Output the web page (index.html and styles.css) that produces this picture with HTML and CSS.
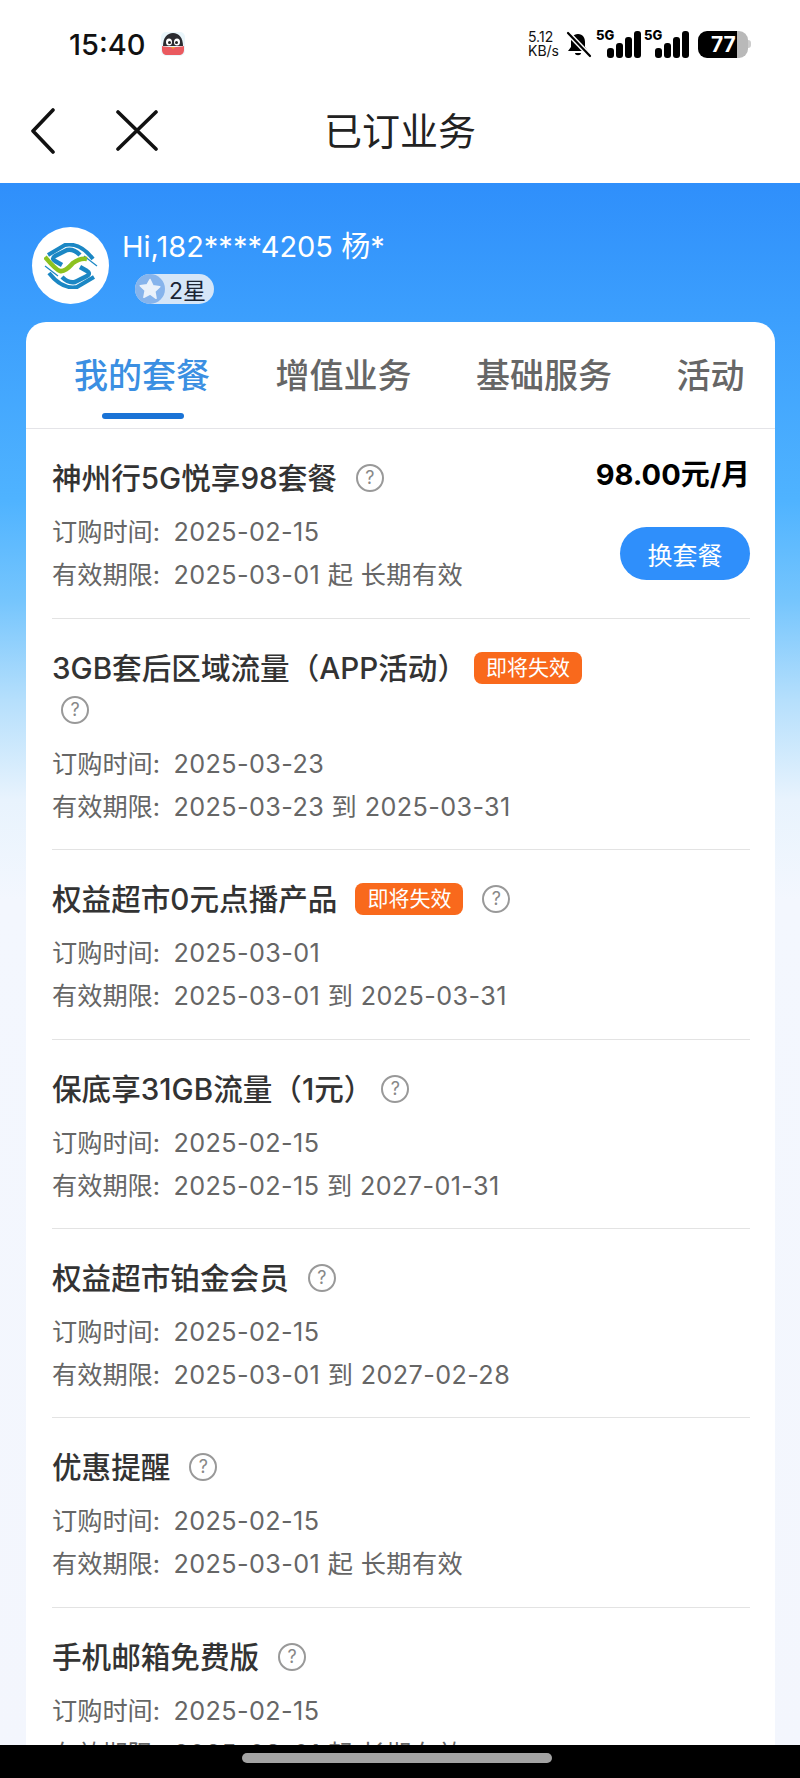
FILE: index.html
```html
<!DOCTYPE html>
<html lang="zh-CN">
<head>
<meta charset="UTF-8">
<meta name="viewport" content="width=device-width, initial-scale=1.0">
<title>已订业务</title>
<link rel="stylesheet" href="styles.css">
</head>
<body>

<div class="status">
  <div class="status-left">
    <span class="time">15:40</span>
    <svg class="qq" width="24" height="24" viewBox="0 0 24 24">
      <rect width="24" height="24" rx="5" fill="#eaf6fb"/>
      <path d="M2 14C2 6 6 1 12 1s10 5 10 13z" fill="#2b2b30"/>
      <path d="M1 14c4 1.500 18 1.500 22 0v4c0 3-2 5-5 5H6c-3 0-5-2-5-5z" fill="#ea5a5f"/>
      <ellipse cx="8" cy="10" rx="3" ry="3.500" fill="#fff"/>
      <ellipse cx="16" cy="10" rx="3" ry="3.500" fill="#fff"/>
      <circle cx="8.500" cy="10.500" r="1.500" fill="#222"/>
      <circle cx="15.500" cy="10.500" r="1.500" fill="#222"/>
      <path d="M10 15h4l-2 2z" fill="#f0a030"/>
    </svg>
  </div>
  <div class="status-right">
    <div class="speed"><span>5.12</span><span>KB/s</span></div>
    <svg class="bell" width="27" height="27" viewBox="0 0 27 27">
      <path d="M13 3c-5 0-7 4-7 8v5l-3 4h20l-3-4v-5c0-4-2-8-7-8z" fill="#000"/>
      <path d="M10 22h6c0 3-6 3-6 0z" fill="#000"/>
      <path d="M3 2l22 23" stroke="#fff" stroke-width="5"/>
      <path d="M3 2l22 23" stroke="#000" stroke-width="2.200" stroke-linecap="round"/>
    </svg>
    <div class="signal">
      <span class="sig-label">5G</span>
      <svg width="44" height="27" viewBox="0 0 44 27">
        <rect x="9" y="17" width="7" height="10" rx="3"/>
        <rect x="18" y="12" width="7" height="15" rx="3"/>
        <rect x="27" y="6" width="7" height="21" rx="3"/>
        <rect x="36" y="0" width="7" height="27" rx="3"/>
      </svg>
    </div>
    <div class="signal">
      <span class="sig-label">5G</span>
      <svg width="44" height="27" viewBox="0 0 44 27">
        <rect x="9" y="17" width="7" height="10" rx="3"/>
        <rect x="18" y="12" width="7" height="15" rx="3"/>
        <rect x="27" y="6" width="7" height="21" rx="3"/>
        <rect x="36" y="0" width="7" height="27" rx="3"/>
      </svg>
    </div>
    <div class="battery">77</div>
    <div class="battery-tip"></div>
  </div>
</div>

<div class="nav">
  <svg class="nav-back" width="26" height="46" viewBox="0 0 26 46">
    <path d="M23 2L3 23l20 21" fill="none" stroke="#111" stroke-width="3.600" stroke-linecap="round" stroke-linejoin="round"/>
  </svg>
  <svg class="nav-close" width="42" height="41" viewBox="0 0 42 41">
    <path d="M2 2l38 37M40 2L2 39" fill="none" stroke="#111" stroke-width="3.600" stroke-linecap="round"/>
  </svg>
  <h1 class="nav-title">已订业务</h1>
</div>

<div class="page">
  <div class="user">
    <div class="avatar">
      <svg width="54" height="46" viewBox="0 0 54 46">
        <g id="logo-half" fill="none" stroke="#1b87c4" stroke-linejoin="round">
          <path d="M49 16C42 7 32 0 21 2L4 12" stroke-width="4"/>
          <path d="M36 12C32 8 27 6 23 7L11 13c-3 2-2 4 0 5l7 4" stroke-width="4.400"/>
          <path d="M40 13l13 10" stroke-width="1.200"/>
        </g>
        <use href="#logo-half" transform="rotate(180 27 23)"/>
        <path d="M1 14c6 7 11 13 15 14 5 1 9-4 13-8 4-3 9-5 14-4" fill="none" stroke="#8cc220" stroke-width="4.600"/>
      </svg>
    </div>
    <div class="user-info">
      <div class="user-name">Hi,182****4205 杨*</div>
      <div class="user-level">
        <span class="star-wrap">
          <svg width="24" height="24" viewBox="0 0 24 24">
            <path d="M12 2.500l3 6.300 6.800.9-5 4.700 1.300 6.900L12 17l-6.100 3.300 1.300-6.900-5-4.700 6.800-.9z" fill="#eaf2fb" stroke="#eaf2fb" stroke-width="1.500" stroke-linejoin="round"/>
          </svg>
        </span>
        <span>2星</span>
      </div>
    </div>
  </div>

  <div class="card">
    <div class="tabs">
      <div class="tab tab-active">我的套餐</div>
      <div class="tab">增值业务</div>
      <div class="tab">基础服务</div>
      <div class="tab">活动</div>
    </div>

    <div class="item item-main">
      <div class="item-body">
        <div class="item-title"><span>神州行5G悦享98套餐</span><span class="help">?</span></div>
        <div class="meta"><span class="label">订购时间:</span> 2025-02-15</div>
        <div class="meta"><span class="label">有效期限:</span> 2025-03-01 起 长期有效</div>
      </div>
      <div class="item-side">
        <div class="price">98.00元/月</div>
        <button class="change-btn">换套餐</button>
      </div>
    </div>

    <div class="item">
      <div class="item-title item-title-top"><span class="title-trim">3GB套后区域流量（APP活动）</span><span class="tag">即将失效</span></div>
      <div class="help-row"><span class="help">?</span></div>
      <div class="meta"><span class="label">订购时间:</span> 2025-03-23</div>
      <div class="meta"><span class="label">有效期限:</span> 2025-03-23 到 2025-03-31</div>
    </div>

    <div class="item">
      <div class="item-title"><span>权益超市0元点播产品</span><span class="tag">即将失效</span><span class="help">?</span></div>
      <div class="meta"><span class="label">订购时间:</span> 2025-03-01</div>
      <div class="meta"><span class="label">有效期限:</span> 2025-03-01 到 2025-03-31</div>
    </div>

    <div class="item">
      <div class="item-title"><span class="title-trim">保底享31GB流量（1元）</span><span class="help">?</span></div>
      <div class="meta"><span class="label">订购时间:</span> 2025-02-15</div>
      <div class="meta"><span class="label">有效期限:</span> 2025-02-15 到 2027-01-31</div>
    </div>

    <div class="item">
      <div class="item-title"><span>权益超市铂金会员</span><span class="help">?</span></div>
      <div class="meta"><span class="label">订购时间:</span> 2025-02-15</div>
      <div class="meta"><span class="label">有效期限:</span> 2025-03-01 到 2027-02-28</div>
    </div>

    <div class="item">
      <div class="item-title"><span>优惠提醒</span><span class="help">?</span></div>
      <div class="meta"><span class="label">订购时间:</span> 2025-02-15</div>
      <div class="meta"><span class="label">有效期限:</span> 2025-03-01 起 长期有效</div>
    </div>

    <div class="item">
      <div class="item-title"><span>手机邮箱免费版</span><span class="help">?</span></div>
      <div class="meta"><span class="label">订购时间:</span> 2025-02-15</div>
      <div class="meta"><span class="label">有效期限:</span> 2025-03-01 起 长期有效</div>
    </div>
  </div>
</div>

<div class="gesture-bar"><div class="gesture-handle"></div></div>

</body>
</html>
```

FILE: styles.css
```css
* {
  box-sizing: border-box;
}
html, body {
  margin: 0;
  padding: 0;
}
body {
  position: relative;
  width: 800px;
  height: 1778px;
  overflow: hidden;
  background-color: #fff;
  font-family: Inter, "Noto Sans CJK SC", sans-serif;
}

/* status bar */
.status {
  display: flex;
  justify-content: space-between;
  align-items: center;
  height: 88px;
  padding: 0 49px 0 69px;
}
.status-left {
  display: flex;
  align-items: center;
  gap: 15px;
}
.time {
  font-size: 29px;
  font-weight: 500;
  color: #111;
}
.qq {
  margin-top: -1px;
}
.status-right {
  display: flex;
  align-items: center;
}
.speed {
  display: flex;
  flex-direction: column;
  font-size: 14px;
  line-height: 14px;
  color: #111;
}
.bell {
  margin: 0 2px 0 6px;
}
.signal {
  position: relative;
  margin-left: 4px;
}
.signal svg {
  display: block;
}
.signal rect {
  fill: #000;
}
.sig-label {
  position: absolute;
  left: -2px;
  top: -3px;
  font-size: 13px;
  font-weight: 800;
  line-height: 14px;
  color: #000;
}
.battery {
  width: 50px;
  height: 27px;
  margin-left: 8px;
  padding-left: 13px;
  border-radius: 9px;
  background: linear-gradient(90deg, #000 78%, #b9b9b9 78%);
  color: #fff;
  font-size: 21px;
  font-weight: 700;
  line-height: 27px;
}
.battery-tip {
  width: 3px;
  height: 8px;
  border-radius: 0 3px 3px 0;
  background-color: #ccc;
}

/* nav */
.nav {
  position: relative;
  display: flex;
  align-items: center;
  height: 95px;
  padding: 0 0 10px 30px;
}
.nav-close {
  margin-left: 60px;
}
.nav-title {
  position: absolute;
  left: 324px;
  top: 18px;
  margin: 0;
  font-size: 38px;
  font-weight: 400;
  line-height: 50px;
  color: #222;
}

/* blue area */
.page {
  height: 1595px;
  padding: 44px 25px 0 26px;
  background: linear-gradient(180deg, #2f8ffb 0, #3b9efd 127px, #4fb3ff 317px, #75c5fd 417px, #b5dffc 517px, #e8f3fd 617px, #f3f7fe 717px, #f3f6fd 100%);
}
.user {
  display: flex;
  gap: 13px;
  padding-left: 6px;
}
.avatar {
  display: flex;
  justify-content: center;
  align-items: center;
  width: 77px;
  height: 77px;
  border-radius: 50%;
  background-color: #fff;
}
.user-name {
  font-size: 29px;
  line-height: 40px;
  white-space: nowrap;
  color: #fff;
}
.user-level {
  display: flex;
  align-items: center;
  gap: 4px;
  width: 79px;
  height: 30px;
  margin: 7px 0 0 13px;
  border-radius: 15px;
  background-color: #d5e6f8;
  font-size: 23px;
  color: #1a2433;
}
.star-wrap {
  display: flex;
  justify-content: center;
  align-items: center;
  width: 30px;
  height: 30px;
  border-radius: 50%;
  background-color: #86b4ec;
}

/* card */
.card {
  margin-top: 18px;
  height: 1500px;
  border-radius: 20px 20px 0 0;
  background-color: #fff;
}
.tabs {
  display: flex;
  gap: 64.500px;
  height: 107px;
  padding: 29px 0 0 48px;
  border-bottom: 1px solid #e4e4e8;
}
.tab {
  position: relative;
  font-size: 34px;
  font-weight: 500;
  line-height: 50px;
  white-space: nowrap;
  color: #666;
}
.tab-active {
  margin-right: 1px;
  color: #3b8fe2;
}
.tab-active::after {
  content: "";
  position: absolute;
  left: 28px;
  top: 62px;
  width: 82px;
  height: 6px;
  border-radius: 3px;
  background-color: #1a73d6;
}

/* list */
.item {
  margin: 0 25px 0 26px;
  padding: 28px 0 20.330px;
  border-bottom: 1px solid #e3e3e3;
}
.item-main {
  display: flex;
  justify-content: space-between;
  padding-bottom: 21px;
}
.item-title {
  display: flex;
  align-items: center;
  min-height: 42px;
  margin-bottom: 12px;
  font-size: 29.600px;
  font-weight: 500;
  line-height: 42px;
  white-space: nowrap;
  color: #333;
}
.title-trim {
  margin-right: -11px;
}
.item-title-top {
  margin-bottom: 0;
}
.help-row {
  display: flex;
  align-items: center;
  height: 42px;
  margin-bottom: 12px;
}
.help-row .help {
  margin-left: 9px;
}
.meta {
  font-size: 25.200px;
  line-height: 43px;
  letter-spacing: 0.400px;
  white-space: nowrap;
  color: #666;
}
.label {
  margin-right: 6px;
  letter-spacing: 0;
}
.help {
  display: inline-flex;
  justify-content: center;
  align-items: center;
  width: 28px;
  height: 28px;
  margin-left: 19px;
  border: 2px solid #999;
  border-radius: 50%;
  font-size: 18px;
  font-weight: 400;
  line-height: 1;
  color: #888;
}
.tag {
  height: 32px;
  margin-left: 18px;
  padding: 0 12px;
  border-radius: 8px;
  background-color: #f9691c;
  font-size: 21px;
  font-weight: 400;
  line-height: 32px;
  color: #fff;
}
.item-side {
  display: flex;
  flex-direction: column;
  align-items: flex-end;
}
.price {
  margin-top: -3px;
  font-size: 29px;
  font-weight: 700;
  line-height: 42px;
  color: #000;
}
.change-btn {
  width: 130px;
  height: 53px;
  margin-top: 31px;
  border: none;
  border-radius: 27px;
  background-color: #2f8ffb;
  font-family: inherit;
  font-size: 25px;
  color: #fff;
}

/* bottom gesture bar */
.gesture-bar {
  position: absolute;
  left: 0;
  right: 0;
  bottom: 0;
  height: 33px;
  background-color: #000;
}
.gesture-handle {
  width: 310px;
  height: 10px;
  margin: 8px 0 0 242px;
  border-radius: 5px;
  background-color: #a3a3a3;
}
```
